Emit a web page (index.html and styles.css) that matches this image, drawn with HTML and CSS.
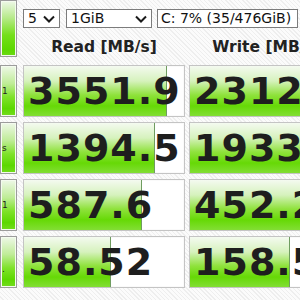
FILE: index.html
```html
<!DOCTYPE html>
<html lang="en">

<head>
    <meta charset="UTF-8">
    <meta name="viewport" content="width=device-width, initial-scale=1.0">
    <title>CrystalDiskMark</title>
    <link rel="stylesheet" href="styles.css">
</head>

<body>
    <div class="app">
        <div class="top">
            <div class="side all"></div>
            <div class="head">
                <div class="controls">
                    <div class="select count">5
                        <svg class="chev" width="12" height="8" viewBox="0 0 12 8"><polyline points="1,1.5 6,6.5 11,1.5" /></svg>
                    </div>
                    <div class="select size">1GiB
                        <svg class="chev" width="12" height="8" viewBox="0 0 12 8"><polyline points="1,1.5 6,6.5 11,1.5" /></svg>
                    </div>
                    <div class="select drive">C: 7% (35/476GiB)</div>
                </div>
                <div class="titles">
                    <div class="title read">Read [MB/s]</div>
                    <div class="title write">Write [MB/s]</div>
                </div>
            </div>
        </div>

        <div class="row">
            <div class="side"><span class="label">1</span></div>
            <div class="cell read">
                <div class="fill" style="width: 89.5%"></div>
                <div class="value">3551.9</div>
            </div>
            <div class="cell write">
                <div class="fill full"></div>
                <div class="value">2312.</div>
            </div>
        </div>

        <div class="row">
            <div class="side"><span class="label">s</span></div>
            <div class="cell read">
                <div class="fill" style="width: 82%"></div>
                <div class="value">1394.5</div>
            </div>
            <div class="cell write">
                <div class="fill full"></div>
                <div class="value">1933.</div>
            </div>
        </div>

        <div class="row">
            <div class="side"><span class="label">1</span></div>
            <div class="cell read">
                <div class="fill" style="width: 74%"></div>
                <div class="value">587.6</div>
            </div>
            <div class="cell write">
                <div class="fill full"></div>
                <div class="value">452.2</div>
            </div>
        </div>

        <div class="row">
            <div class="side"><span class="label low">.</span></div>
            <div class="cell read">
                <div class="fill" style="width: 54.3%"></div>
                <div class="value">58.52</div>
            </div>
            <div class="cell write">
                <div class="fill" style="width: 64.7%"></div>
                <div class="value">158.5</div>
            </div>
        </div>
    </div>
</body>

</html>
```

FILE: styles.css
```css
* {
    padding: 0;
    margin: 0;
    box-sizing: border-box;
}

body {
    width: 300px;
    height: 300px;
    overflow: hidden;
    font-family: "DejaVu Sans", Verdana, sans-serif;
    color: #1e1e1e;
    background: repeating-linear-gradient(45deg, #fbfbfb 0 2px, #eeeeee 2px 3px);
}

.app {
    display: flex;
    flex-direction: column;
    gap: 5px;
}

.top {
    display: flex;
    gap: 6px;
    height: 57px;
    margin-bottom: 3px;
}

.side {
    flex: 0 0 17px;
    width: 17px;
    border: 1px solid #9c9c9c;
    box-shadow: inset 0 0 0 1px #f4fbef;
    background: linear-gradient(#eef8e8 0%, #bfec97 35%, #7fe22a 62%, #5cd800 85%, #74dc1e 100%);
    overflow: hidden;
    display: flex;
    align-items: center;
    justify-content: flex-end;
}

.all {
    background: linear-gradient(#eef8e8 0%, #b8ea8c 30%, #74df1a 62%, #5cd800 88%, #6cda14 100%);
}

.label {
    width: 100%;
    padding-left: 1px;
    font-size: 9px;
    color: #222;
}

.label.low {
    padding-top: 14px;
}

.head {
    flex: 1;
    display: flex;
    flex-direction: column;
}

.controls {
    display: flex;
    margin-top: 9px;
    height: 22px;
}

.select {
    display: flex;
    align-items: center;
    justify-content: space-between;
    border: 1px solid #7c7c7c;
    background: #fff;
    font-size: 14px;
    color: #111;
    padding: 0 4px 1px 4px;
    white-space: nowrap;
}

.count {
    width: 37px;
}

.size {
    width: 86px;
    margin-left: 6px;
}

.drive {
    width: 141px;
    margin-left: 5px;
    padding-left: 3px;
}

.chev {
    margin-top: 1px;
}

.chev polyline {
    fill: none;
    stroke: #1a1a1a;
    stroke-width: 2;
}

.titles {
    display: flex;
    margin-top: 9px;
    white-space: nowrap;
}

.title {
    text-align: center;
    font-weight: bold;
    font-size: 15.5px;
    line-height: 20px;
    color: #222;
}

.title.read {
    flex: 0 0 162px;
}

.title.write {
    flex: 0 0 156px;
    margin-left: 4px;
}

.row {
    display: flex;
    height: 52px;
}

.cell {
    display: grid;
    height: 52px;
    border: 1px solid #c4c4c4;
    box-shadow: inset 0 0 0 1px #fafafa;
    background: #fff;
    overflow: hidden;
}

.cell.read {
    flex: 0 0 162px;
    margin-left: 6px;
}

.cell.write {
    flex: 0 0 156px;
    margin-left: 4px;
}

.fill,
.value {
    grid-area: 1 / 1;
}

.fill {
    height: 100%;
    border-right: 1px solid #6f9c60;
    background: linear-gradient(#f4faf0 0%, #d6f2bd 30%, #8fe23c 58%, #66d906 80%, #82de34 100%);
}

.fill.full {
    width: 100%;
    border-right: none;
}

.value {
    display: flex;
    align-items: center;
    padding-left: 4px;
    font-weight: bold;
    font-size: 38px;
    letter-spacing: 1px;
    line-height: 1;
    white-space: nowrap;
    color: #1e1e1e;
}
```
